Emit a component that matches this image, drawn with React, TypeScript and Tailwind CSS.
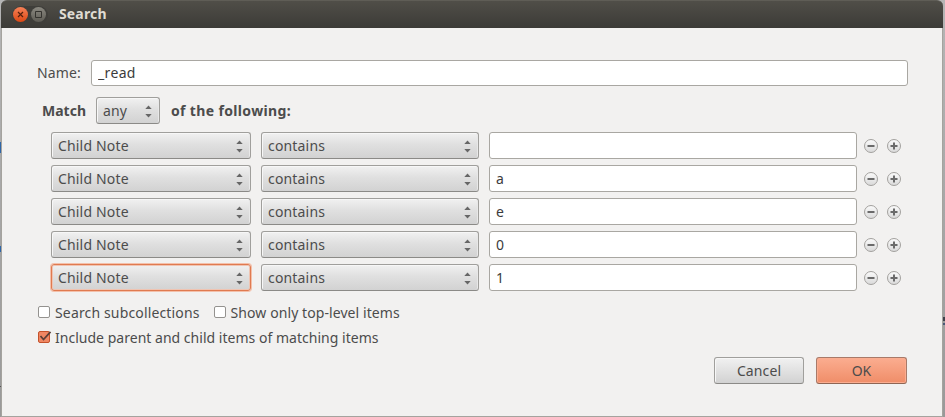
import { useState } from "react";

interface Condition {
  id: number;
  field: string;
  operator: string;
  value: string;
}

const conditions: Condition[] = [
  { id: 1, field: "Child Note", operator: "contains", value: "" },
  { id: 2, field: "Child Note", operator: "contains", value: "a" },
  { id: 3, field: "Child Note", operator: "contains", value: "e" },
  { id: 4, field: "Child Note", operator: "contains", value: "0" },
  { id: 5, field: "Child Note", operator: "contains", value: "1" },
];

interface SelectProps {
  label: string;
  className: string;
  focused?: boolean;
}

function Select({ label, className, focused }: SelectProps) {
  return (
    <button
      className={`flex h-[27px] shrink-0 items-center justify-between rounded-[3px] border bg-linear-to-b from-[#f1f1f1] via-[#e0e0e0] via-45% to-[#d2d2d2] pr-[7px] pl-[6px] tracking-[0.17px] ${
        focused
          ? "border-[#e07a50] shadow-[0_0_0_1px_#f3c0aa,inset_0_0_0_1px_#efc4b2]"
          : "border-[#a09f9c] border-b-[#8b8a87] shadow-[inset_1px_1px_0_#f7f7f7,inset_-1px_0_0_#e8e8e8]"
      } ${className}`}
    >
      <span>{label}</span>
      <svg width="7" height="13" viewBox="0 0 7 13" className="mt-[2px]" fill="#666">
        <path d="M3.5 .5 6.7 4H.3z" />
        <path d="M3.5 12.5 6.7 9H.3z" />
      </svg>
    </button>
  );
}

function RoundButton({ type }: { type: "minus" | "plus" }) {
  return (
    <button className="shrink-0" aria-label={type}>
      <svg width="15" height="15" viewBox="0 0 15 15">
        <defs>
          <linearGradient id={`round-${type}`} x1="0" y1="0" x2="0" y2="1">
            <stop offset="0" stopColor="#fbfbfb" />
            <stop offset="1" stopColor="#d9d9d9" />
          </linearGradient>
        </defs>
        <circle cx="8" cy="8" r="6.5" fill={`url(#round-${type})`} stroke="#a3a19e" />
        <path
          d={type === "minus" ? "M4.5 8h7" : "M4.5 8h7M8 4.5v7"}
          stroke="#6a6a6a"
          strokeWidth="2"
        />
      </svg>
    </button>
  );
}

interface CheckboxProps {
  label: string;
  defaultChecked?: boolean;
  className: string;
}

function Checkbox({ label, defaultChecked = false, className }: CheckboxProps) {
  const [checked, setChecked] = useState(defaultChecked);
  return (
    <button className="flex h-[25px] items-center gap-[4px]" onClick={() => setChecked(!checked)}>
      <svg width="13" height="13" viewBox="0 0 13 13" className="-mt-px overflow-visible">
        <rect
          x=".5"
          y=".5"
          width="11"
          height="11"
          rx="1.5"
          fill={checked ? "#f08763" : "#fff"}
          stroke={checked ? "#c4522b" : "#94928f"}
        />
        {checked && (
          <path d="M2.5 5 5.5 8.5 12.5 .8" fill="none" stroke="#5a4038" strokeWidth="1.8" />
        )}
      </svg>
      <span className={className}>{label}</span>
    </button>
  );
}

function TitleBar() {
  return (
    <div className="flex h-7 shrink-0 items-center rounded-t-[6px] border-t border-[#5f5d56] bg-linear-to-b from-[#504e48] to-[#3c3b37] pl-[11px]">
      <svg width="36" height="18" viewBox="0 0 36 18">
        <defs>
          <linearGradient id="close" x1="0" y1="0" x2="0" y2="1">
            <stop offset="0" stopColor="#f68157" />
            <stop offset="1" stopColor="#dd4814" />
          </linearGradient>
          <linearGradient id="max" x1="0" y1="0" x2="0" y2="1">
            <stop offset="0" stopColor="#8a8880" />
            <stop offset="1" stopColor="#5e5c55" />
          </linearGradient>
        </defs>
        <rect width="36" height="18" rx="9" fill="#3f3e3a" />
        <circle cx="8.5" cy="8.5" r="7.5" fill="url(#close)" />
        <path d="m6 6 5 5m0-5-5 5" stroke="#55200d" strokeWidth="1.2" />
        <circle cx="26.5" cy="8.5" r="7.5" fill="url(#max)" />
        <path d="M23.5 5.5h6v6h-6z" fill="none" stroke="#34332f" />
      </svg>
      <span className="mb-[2px] ml-[11px] text-[14px] font-bold tracking-[0.15px] text-[#dfdbd2]">
        Search
      </span>
    </div>
  );
}

export default function App() {
  return (
    <div className="relative h-[417px] w-[945px] overflow-hidden bg-linear-to-b from-[#b5b5b5] to-[#999] pr-[2px] pl-px font-['Noto_Sans','Open_Sans',sans-serif] text-[14px] leading-[20px] text-[#4c4c4c]">
      {/* slivers of the window behind the dialog */}
      <span className="absolute top-[142px] left-0 h-[11px] w-px bg-[#2f66a8]" />
      <span className="absolute top-[246px] left-0 h-[6px] w-px bg-[#2f66a8]" />
      <span className="absolute top-[386px] left-0 h-px w-px bg-[#555]" />
      <span className="absolute top-[317px] right-0 h-[4px] w-[2px] bg-[#40404a]" />
      <span className="absolute top-[323px] right-0 h-[2px] w-[2px] bg-[#4a5878]" />
      <div className="flex h-full flex-col">
        <TitleBar />
        <div className="flex grow flex-col border-r border-b border-l border-[#a5a39e] bg-[#f2f1f0] pt-8 pr-[34px] pl-[35px]">
          <div className="flex h-[26px] items-center">
            <label className="w-[54px] tracking-[0.1px]">Name:</label>
            <input
              defaultValue="_read"
              className="h-[26px] w-[817px] rounded-[3px] border border-[#a9a7a2] bg-white px-[6px] pb-[2px] tracking-[0.35px] text-[#3c3c3c] outline-none"
            />
          </div>

          <div className="mt-[11px] flex h-[27px] items-center pl-[5px]">
            <span className="w-[54px] font-bold">Match</span>
            <Select label="any" className="w-[64px]" />
            <span className="ml-[11px] font-bold tracking-[0.35px]">of the following:</span>
          </div>

          <div className="mt-2 flex flex-col gap-[6px] pl-[14px]">
            {conditions.map((c) => (
              <div key={c.id} className="flex items-center">
                <Select label={c.field} className="w-[200px]" focused={c.id === 5} />
                <Select label={c.operator} className="ml-[10px] w-[218px]" />
                <input
                  defaultValue={c.value}
                  className="ml-[10px] h-[27px] w-[368px] rounded-[3px] border border-[#a9a7a2] bg-white px-[6px] text-[#3c3c3c] outline-none"
                />
                <div className="ml-[6px] flex gap-2">
                  <RoundButton type="minus" />
                  <RoundButton type="plus" />
                </div>
              </div>
            ))}
          </div>

          <div className="mt-[9px] pl-px">
            <div className="flex gap-[14px]">
              <Checkbox label="Search subcollections" className="tracking-[0.15px]" />
              <Checkbox label="Show only top-level items" className="tracking-[0.08px]" />
            </div>
            <Checkbox
              label="Include parent and child items of matching items"
              className="tracking-[0.02px]"
              defaultChecked
            />
          </div>

          <div className="mt-[7px] flex justify-end gap-3 pr-px">
            <button className="h-[27px] w-[90px] rounded-[3px] border border-[#a09f9c] border-b-[#8b8a87] bg-linear-to-b from-[#f1f1f1] to-[#d2d2d2] tracking-[0.1px] shadow-[inset_1px_1px_0_#f7f7f7]">
              Cancel
            </button>
            <button className="h-[27px] w-[91px] rounded-[3px] border border-[#a87a69] border-b-[#8f6553] bg-linear-to-b from-[#fbad90] to-[#ef8d68] shadow-[inset_0_0_0_1px_#fbad90]">
              OK
            </button>
          </div>
        </div>
      </div>
    </div>
  );
}
